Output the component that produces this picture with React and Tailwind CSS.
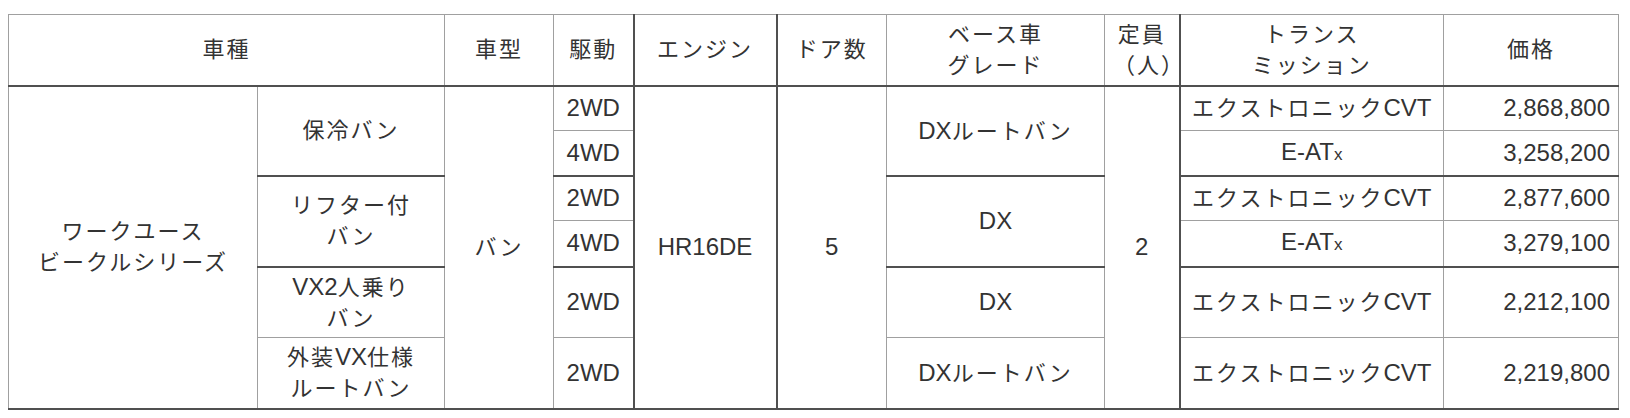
import React from "react";

const Cell = ({ children, rowSpan, colSpan, l, b, right, head, className = "" }) => {
  const Tag = head ? "th" : "td";
  return (
    <Tag
      rowSpan={rowSpan}
      colSpan={colSpan}
      className={
        "border border-[#a0a0a0] px-2 align-middle font-normal " +
        (l ? "border-l-2 border-l-[#505050] " : "") +
        (b ? "border-b-2 border-b-[#505050] " : "") +
        (right ? "text-right pr-[8px] " : "text-center ") +
        className
      }
    >
      {children}
    </Tag>
  );
};

// Latin / digits are set a bit larger and without the kana spacing
const L = ({ children }) => (
  <span className="text-[24px] tracking-normal">{children}</span>
);

const ATx = () => (
  <L>
    E-AT<span className="text-[17px]">x</span>
  </L>
);

const CVT = () => (
  <>
    エクストロニック<L>CVT</L>
  </>
);

const App = () => {
  return (
    <div className="bg-white w-[1630px] h-[418px] pt-[14px] pl-[8px]">
      <table
        className="table-fixed border-collapse w-[1610px] text-[22px] leading-[31px] tracking-[2px] text-[#333333]"
        style={{ fontFamily: '"Liberation Sans", "Noto Sans CJK JP", sans-serif' }}
      >
        <colgroup>
          <col className="w-[249px]" />
          <col className="w-[187px]" />
          <col className="w-[109px]" />
          <col className="w-[80px]" />
          <col className="w-[143px]" />
          <col className="w-[110px]" />
          <col className="w-[218px]" />
          <col className="w-[75px]" />
          <col className="w-[264px]" />
          <col className="w-[175px]" />
        </colgroup>
        <thead>
          <tr className="h-[71px]">
            <Cell head b colSpan={2}>車種</Cell>
            <Cell head b>車型</Cell>
            <Cell head b>駆動</Cell>
            <Cell head b l>エンジン</Cell>
            <Cell head b l>ドア数</Cell>
            <Cell head b>
              ベース車
              <br />
              グレード
            </Cell>
            <Cell head b>
              定員
              <br />
              （人）
            </Cell>
            <Cell head b l>
              トランス
              <br />
              ミッション
            </Cell>
            <Cell head b>価格</Cell>
          </tr>
        </thead>
        <tbody>
          {/* 保冷バン */}
          <tr className="h-[45px]">
            <Cell rowSpan={6} b>
              ワークユース
              <br />
              ビークルシリーズ
            </Cell>
            <Cell rowSpan={2} b>保冷バン</Cell>
            <Cell rowSpan={6} b>バン</Cell>
            <Cell><L>2WD</L></Cell>
            <Cell rowSpan={6} b l><L>HR16DE</L></Cell>
            <Cell rowSpan={6} b l><L>5</L></Cell>
            <Cell rowSpan={2} b><L>DX</L>ルートバン</Cell>
            <Cell rowSpan={6} b><L>2</L></Cell>
            <Cell l><CVT /></Cell>
            <Cell right><L>2,868,800</L></Cell>
          </tr>
          <tr className="h-[45px]">
            <Cell b><L>4WD</L></Cell>
            <Cell b l><ATx /></Cell>
            <Cell b right><L>3,258,200</L></Cell>
          </tr>

          {/* リフター付バン */}
          <tr className="h-[45px]">
            <Cell rowSpan={2} b>
              リフター付
              <br />
              バン
            </Cell>
            <Cell><L>2WD</L></Cell>
            <Cell rowSpan={2} b><L>DX</L></Cell>
            <Cell l><CVT /></Cell>
            <Cell right><L>2,877,600</L></Cell>
          </tr>
          <tr className="h-[46px]">
            <Cell b><L>4WD</L></Cell>
            <Cell b l><ATx /></Cell>
            <Cell b right><L>3,279,100</L></Cell>
          </tr>

          {/* VX2人乗りバン */}
          <tr className="h-[71px]">
            <Cell>
              <L>VX2</L>人乗り
              <br />
              バン
            </Cell>
            <Cell><L>2WD</L></Cell>
            <Cell><L>DX</L></Cell>
            <Cell l><CVT /></Cell>
            <Cell right><L>2,212,100</L></Cell>
          </tr>

          {/* 外装VX仕様ルートバン */}
          <tr className="h-[71px]">
            <Cell b>
              外装<L>VX</L>仕様
              <br />
              ルートバン
            </Cell>
            <Cell b><L>2WD</L></Cell>
            <Cell b><L>DX</L>ルートバン</Cell>
            <Cell b l><CVT /></Cell>
            <Cell b right><L>2,219,800</L></Cell>
          </tr>
        </tbody>
      </table>
    </div>
  );
};

export default App;
